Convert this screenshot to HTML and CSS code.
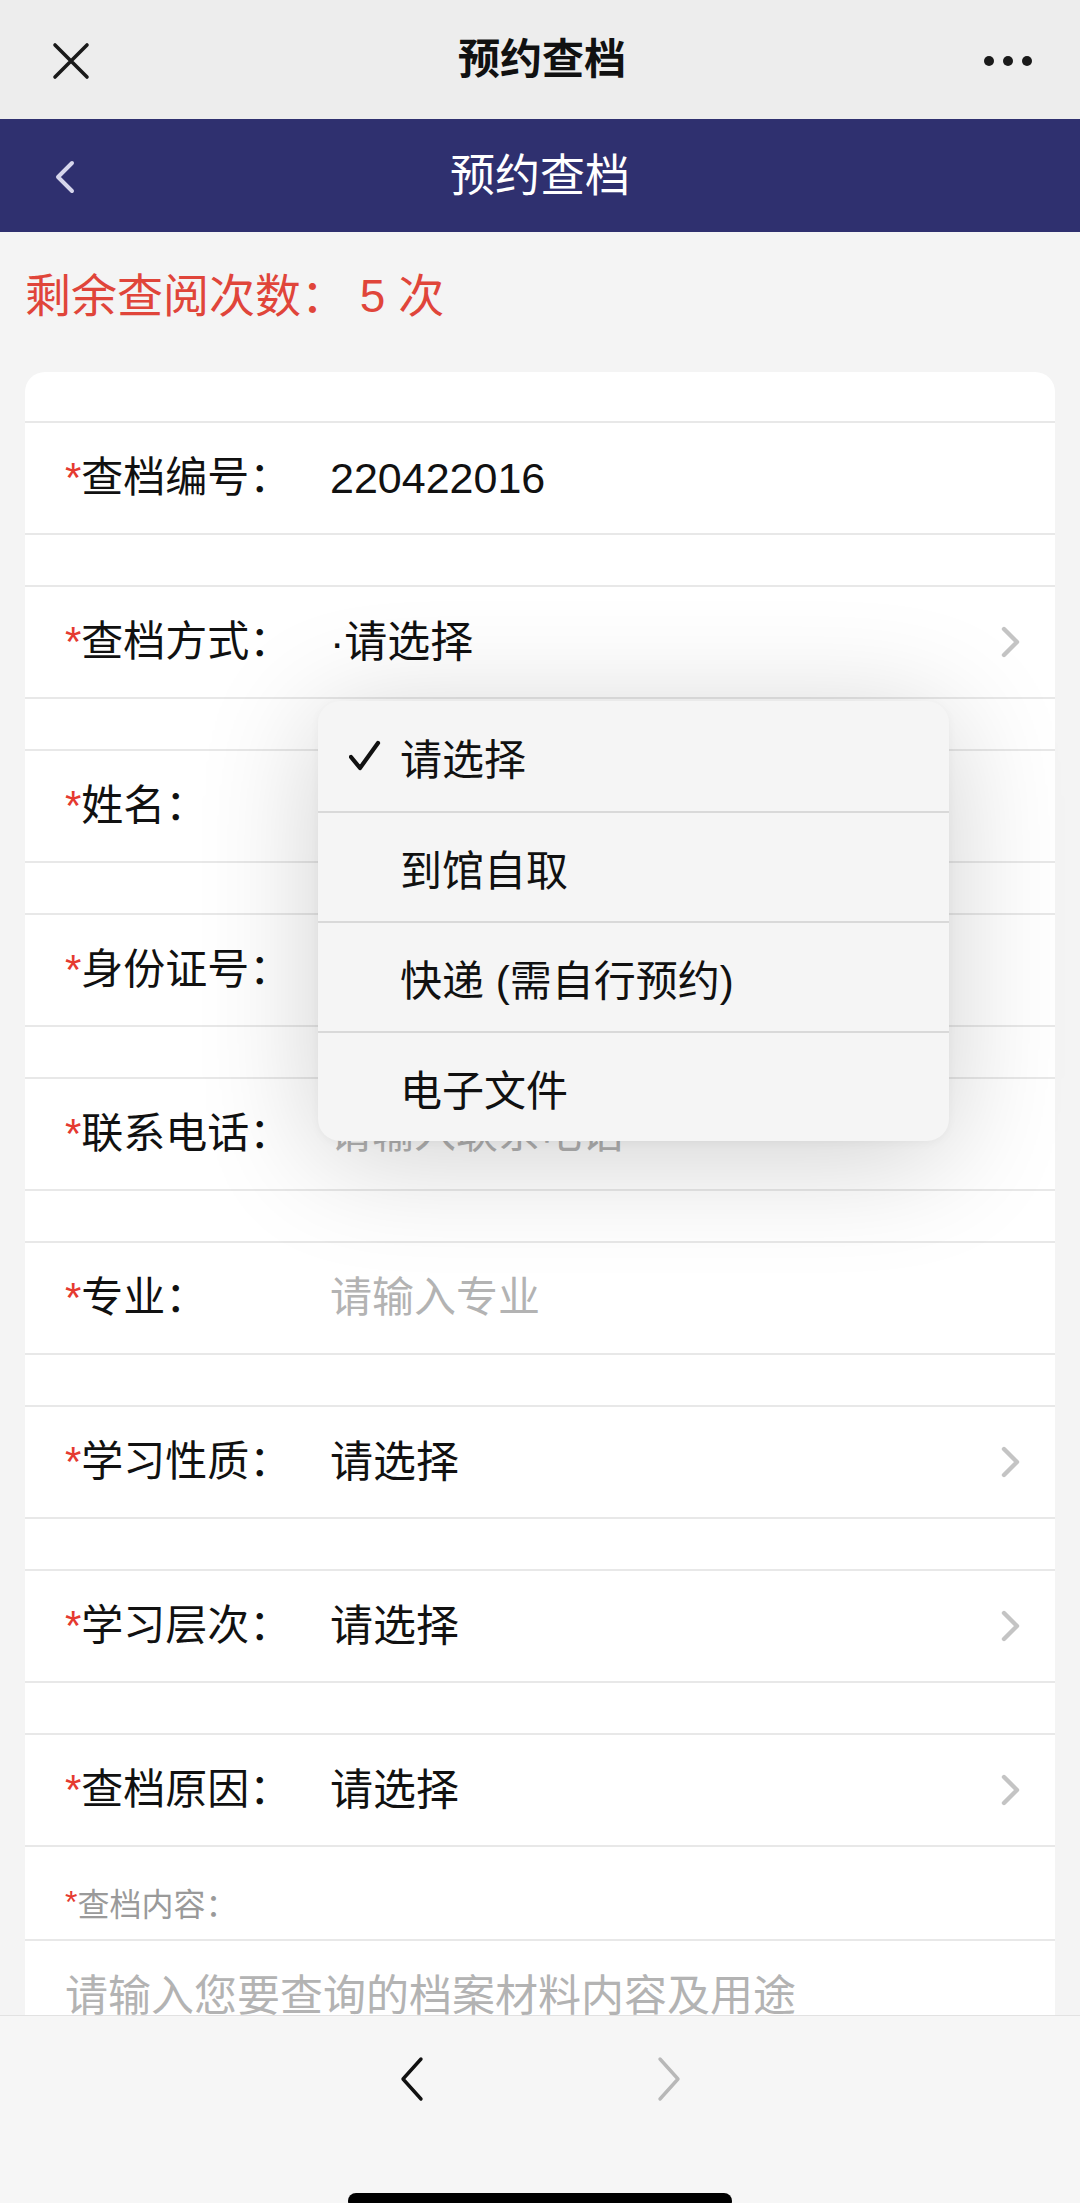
FILE: index.html
```html
<!DOCTYPE html>
<html lang="zh-CN">
<head>
  <meta charset="UTF-8">
  <meta name="viewport" content="width=device-width, initial-scale=1.0">
  <title>预约查档</title>
  <link rel="stylesheet" href="styles.css">
</head>
<body>
  <div class="app">
    <header class="topbar">
      <svg class="topbar-close" width="38" height="38" viewBox="0 0 38 38">
        <path d="M3 3 L35 35 M35 3 L3 35" stroke="#1a1a1a" stroke-width="3.6" stroke-linecap="round"/>
      </svg>
      <h1 class="topbar-title">预约查档</h1>
      <div class="topbar-more"><i></i><i></i><i></i></div>
    </header>

    <nav class="navbar">
      <svg class="navbar-back" width="22" height="34" viewBox="0 0 22 34">
        <polyline points="18,3 4,17 18,31" fill="none" stroke="#d6d6ec" stroke-width="4" stroke-linecap="round" stroke-linejoin="round"/>
      </svg>
      <div class="navbar-title">预约查档</div>
      <span></span>
    </nav>

    <main class="content">
      <p class="remain">剩余查阅次数： 5 次</p>

      <div class="card">
        <div class="field">
          <label class="field-label"><span class="req">*</span>查档编号：</label>
          <span class="field-value">220422016</span>
        </div>
        <div class="field">
          <label class="field-label"><span class="req">*</span>查档方式：</label>
          <span class="field-value">·请选择</span>
          <svg class="chev" width="22" height="32" viewBox="0 0 22 32"><polyline points="4,3 17,16 4,29"/></svg>
        </div>
        <div class="field">
          <label class="field-label"><span class="req">*</span>姓名：</label>
          <span class="field-value hint"></span>
        </div>
        <div class="field">
          <label class="field-label"><span class="req">*</span>身份证号：</label>
          <span class="field-value hint"></span>
        </div>
        <div class="field">
          <label class="field-label"><span class="req">*</span>联系电话：</label>
          <span class="field-value hint">请输入联系电话</span>
        </div>
        <div class="field">
          <label class="field-label"><span class="req">*</span>专业：</label>
          <span class="field-value hint">请输入专业</span>
        </div>
        <div class="field">
          <label class="field-label"><span class="req">*</span>学习性质：</label>
          <span class="field-value">请选择</span>
          <svg class="chev" width="22" height="32" viewBox="0 0 22 32"><polyline points="4,3 17,16 4,29"/></svg>
        </div>
        <div class="field">
          <label class="field-label"><span class="req">*</span>学习层次：</label>
          <span class="field-value">请选择</span>
          <svg class="chev" width="22" height="32" viewBox="0 0 22 32"><polyline points="4,3 17,16 4,29"/></svg>
        </div>
        <div class="field">
          <label class="field-label"><span class="req">*</span>查档原因：</label>
          <span class="field-value">请选择</span>
          <svg class="chev" width="22" height="32" viewBox="0 0 22 32"><polyline points="4,3 17,16 4,29"/></svg>
        </div>
        <div class="area-label"><span class="req">*</span>查档内容：</div>
        <div class="area-input">请输入您要查询的档案材料内容及用途</div>

        <ul class="picker">
          <li class="picker-item"><span class="picker-mark"><svg width="32" height="32" viewBox="0 0 32 32"><polyline points="2,17 11,28 29,3" fill="none" stroke="#111" stroke-width="4.2" stroke-linecap="round" stroke-linejoin="round"/></svg></span>请选择</li>
          <li class="picker-item"><span class="picker-mark"></span>到馆自取</li>
          <li class="picker-item"><span class="picker-mark"></span>快递 (需自行预约)</li>
          <li class="picker-item"><span class="picker-mark"></span>电子文件</li>
        </ul>
      </div>
    </main>

    <footer class="toolbar">
      <div class="toolbar-btns">
        <svg width="26" height="46" viewBox="0 0 26 46"><polyline points="22,3 4,23 22,43" fill="none" stroke="#111" stroke-width="3.4" stroke-linecap="round" stroke-linejoin="round"/></svg>
        <svg width="26" height="46" viewBox="0 0 26 46"><polyline points="4,3 22,23 4,43" fill="none" stroke="#b8b8b8" stroke-width="3.4" stroke-linecap="round" stroke-linejoin="round"/></svg>
      </div>
      <div class="home-bar"></div>
    </footer>
  </div>
</body>
</html>
```

FILE: styles.css
```css
* { box-sizing: border-box; }
body { margin: 0; background: #f4f4f4; font-family: "Liberation Sans", "Noto Sans CJK SC", sans-serif; color: #111; }
.app { width: 1080px; height: 2203px; display: flex; flex-direction: column; overflow: hidden; }

.topbar { height: 119px; background: #ededed; display: grid; grid-template-columns: 1fr auto 1fr; align-items: center; padding: 0 48px 0 52px; }
.topbar-close { justify-self: start; margin-top: 2px; }
.topbar-title { margin: 0; font-size: 42px; font-weight: 600; line-height: 1; color: #111; }
.topbar-more { justify-self: end; display: flex; gap: 9px; margin-top: 2px; }
.topbar-more i { width: 10px; height: 10px; border-radius: 50%; background: #1a1a1a; }

.navbar { height: 113px; background: #2f306f; display: grid; grid-template-columns: 1fr auto 1fr; align-items: center; padding: 0 54px; }
.navbar-back { justify-self: start; margin-top: 2px; }
.navbar-title { font-size: 45px; color: #fff; line-height: 1; margin-top: 2px; }

.content { flex: 1; overflow: hidden; }
.remain { margin: 34px 0 0 25px; height: 60px; line-height: 60px; font-size: 46px; color: #e0453a; }

.card { position: relative; margin: 46px 25px 0; background: #fff; border-radius: 20px 20px 0 0; padding-top: 49px; }
.field { display: flex; align-items: center; height: 114px; border-top: 2px solid #e8e8e8; border-bottom: 2px solid #e8e8e8; padding: 0 33px 0 40px; }
.field + .field { margin-top: 50px; }
.field-label { width: 265px; font-size: 42px; line-height: 1; white-space: nowrap; }
.field-value { flex: 1; font-size: 43px; line-height: 1; }
.field-value.hint { color: #b3b3b3; font-size: 42px; }
.req { color: #e53a30; }
.chev polyline { fill: none; stroke: #c4c4c4; stroke-width: 4.4; stroke-linecap: round; stroke-linejoin: round; }

.area-label { height: 94px; padding: 18px 0 0 40px; display: flex; align-items: center; font-size: 32px; color: #9a9a9a; border-bottom: 2px solid #e8e8e8; }
.area-input { padding: 28px 0 0 40px; line-height: 54px; font-size: 43px; color: #b3b3b3; height: 200px; }

.picker { position: absolute; left: 293px; top: 329px; width: 631px; margin: 0; padding: 0; list-style: none; background: #f5f5f5; border-radius: 22px; box-shadow: 0 16px 120px rgba(0, 0, 0, 0.19), 0 2px 10px rgba(0, 0, 0, 0.04); }
.picker-item { display: flex; align-items: center; height: 110px; font-size: 42px; color: #111; }
.picker-item + .picker-item { border-top: 2px solid #d9d9d9; }
.picker-mark { width: 82px; padding-left: 31px; display: flex; align-items: center; }

.toolbar { height: 188px; background: #f6f6f6; border-top: 1px solid #e2e2e2; display: flex; flex-direction: column; align-items: center; overflow: hidden; }
.toolbar-btns { display: flex; gap: 231px; margin-top: 40px; }
.home-bar { margin-top: auto; margin-bottom: -6px; width: 384px; height: 16px; border-radius: 8px; background: #000; }
```
